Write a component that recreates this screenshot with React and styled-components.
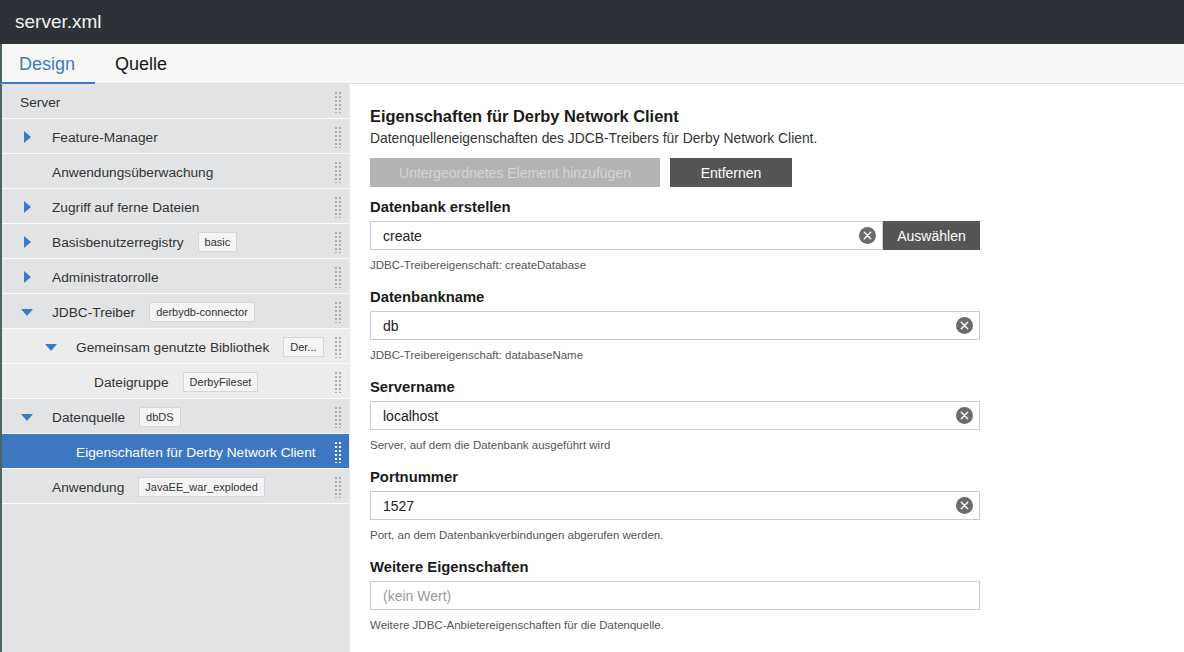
import * as React from "react";
import styled, { createGlobalStyle, css } from "styled-components";

const GlobalStyle = createGlobalStyle`
  html, body {
    margin: 0;
    padding: 0;
    background: #ffffff;
  }
  body {
    font-family: "Liberation Sans", Arial, sans-serif;
  }
  * {
    box-sizing: border-box;
  }
`;

const Page = styled.div`
  width: 1184px;
  height: 652px;
  display: flex;
  flex-direction: column;
  overflow: hidden;
`;

const Header = styled.header`
  height: 44px;
  flex: none;
  background: #2c3237;
  display: flex;
  align-items: center;
  padding-left: 15px;
  color: #f2f2f2;
  font-size: 19px;
`;

const TabBar = styled.nav`
  height: 40px;
  flex: none;
  background: #f7f7f5;
  border-bottom: 1px solid #dedede;
  border-left: 2px solid #4a655f;
  display: flex;
`;

const Tab = styled.div`
  display: flex;
  align-items: center;
  padding: 2px 20px 0 ${(p) => (p.$first ? "17px" : "20px")};
  font-size: 18px;
  color: ${(p) => (p.$active ? "#3e7ac0" : "#151515")};
  border-bottom: 2px solid ${(p) => (p.$active ? "#3e7ac0" : "transparent")};
  margin-bottom: -1px;
`;

const Body = styled.div`
  flex: 1;
  display: flex;
  min-height: 0;
`;

const Sidebar = styled.aside`
  width: 350px;
  flex: none;
  background: #e2e3e4;
  border-left: 2px solid #4a655f;
  border-right: 1px solid #ebebeb;
`;

const Row = styled.div`
  height: 35px;
  display: flex;
  align-items: center;
  padding-top: 2px;
  padding-left: ${(p) => p.$indent}px;
  padding-right: 7px;
  border-bottom: 1px solid #fbfbfb;
  font-size: 13.7px;
  color: #333333;
  background: #e2e3e4;
  ${(p) =>
    p.$nested &&
    css`
      background: #ececec;
    `}
  ${(p) =>
    p.$selected &&
    css`
      background: #3d77c2;
      color: #ffffff;
    `}
`;

const ArrowSlot = styled.span`
  width: 28px;
  flex: none;
  display: flex;
  align-items: center;
  svg {
    margin-left: -3px;
    display: block;
  }
`;

const Label = styled.span`
  white-space: nowrap;
  flex: none;
`;

const Tag = styled.span`
  margin-left: 14px;
  height: 20px;
  line-height: 18px;
  padding: 0 6px;
  background: #f4f4f4;
  border: 1px solid #d6d6d6;
  font-size: 11px;
  color: #333;
  white-space: nowrap;
  flex: none;
`;

const Handle = styled.svg`
  margin-left: auto;
  flex: none;
  display: block;
`;

const Content = styled.main`
  flex: 1;
  padding: 22px 0 0 20px;
`;

const Title = styled.h1`
  margin: 0;
  font-size: 16.4px;
  line-height: 20px;
  font-weight: 700;
  color: #1b1b1b;
`;

const Subtitle = styled.p`
  margin: 2px 0 0;
  font-size: 13.85px;
  line-height: 20px;
  color: #333333;
`;

const ButtonRow = styled.div`
  display: flex;
  gap: 10px;
  margin-top: 10px;
`;

const Button = styled.button`
  height: 29px;
  border: none;
  padding: 0;
  font-family: inherit;
  font-size: 14px;
  width: ${(p) => p.$width}px;
  background: ${(p) => (p.$disabled ? "#b4b4b4" : "#555555")};
  color: ${(p) => (p.$disabled ? "#d6d6d6" : "#ffffff")};
  flex: none;
`;

const Form = styled.div`
  display: flex;
  flex-direction: column;
  gap: 14px;
  margin-top: 10px;
  width: 610px;
`;

const Field = styled.div`
  display: flex;
  flex-direction: column;
`;

const FieldLabel = styled.label`
  font-size: 14.8px;
  line-height: 20px;
  font-weight: 700;
  color: #1b1b1b;
`;

const InputRow = styled.div`
  display: flex;
  margin-top: 4px;
`;

const InputBox = styled.div`
  flex: 1;
  height: 29px;
  border: 1px solid #cccccc;
  display: flex;
  align-items: center;
  padding: 0 6px 0 12px;
  font-size: 14px;
  color: ${(p) => (p.$empty ? "#9a9a9a" : "#222222")};
  background: #ffffff;
`;

const Value = styled.span`
  flex: 1;
`;

const Help = styled.div`
  margin-top: 7px;
  font-size: 11.5px;
  line-height: 16px;
  color: #555555;
`;

const ClearIcon = () => (
  <svg width="17" height="17" viewBox="0 0 17 17">
    <circle cx="8.5" cy="8.5" r="8.5" fill="#6b6b6b" />
    <path
      d="M5.3 5.3 L11.7 11.7 M11.7 5.3 L5.3 11.7"
      stroke="#ffffff"
      strokeWidth="1.4"
      strokeLinecap="round"
    />
  </svg>
);

const Arrow = ({ dir }) => (
  <svg width="12" height="12" viewBox="0 0 12 12">
    {dir === "right" ? (
      <polygon points="3,0 10,6 3,12" fill="#3b7ac6" />
    ) : (
      <polygon points="0,3 12,3 6,10" fill="#3b7ac6" />
    )}
  </svg>
);

const Dots = ({ color }) => (
  <Handle width="8" height="22" viewBox="0 0 8 22">
    {[0, 1, 2, 3, 4, 5].map((r) =>
      [0, 4].map((c) => (
        <rect key={`${r}-${c}`} x={c + 1} y={r * 4 + 1} width="2" height="2" fill={color} />
      ))
    )}
  </Handle>
);

const tree = [
  { label: "Server", x: 20, root: true },
  { label: "Feature-Manager", x: 52, arrow: "right" },
  { label: "Anwendungsüberwachung", x: 52 },
  { label: "Zugriff auf ferne Dateien", x: 52, arrow: "right" },
  { label: "Basisbenutzerregistry", x: 52, arrow: "right", tag: "basic" },
  { label: "Administratorrolle", x: 52, arrow: "right" },
  { label: "JDBC-Treiber", x: 52, arrow: "down", tag: "derbydb-connector" },
  { label: "Gemeinsam genutzte Bibliothek", x: 76, arrow: "down", tag: "Der...", nested: true },
  { label: "Dateigruppe", x: 94, tag: "DerbyFileset", nested: true },
  { label: "Datenquelle", x: 52, arrow: "down", tag: "dbDS" },
  { label: "Eigenschaften für Derby Network Client", x: 76, selected: true },
  { label: "Anwendung", x: 52, tag: "JavaEE_war_exploded" },
];

const fields = [
  { label: "Datenbank erstellen", value: "create", help: "JDBC-Treibereigenschaft: createDatabase", pick: true },
  { label: "Datenbankname", value: "db", help: "JDBC-Treibereigenschaft: databaseName" },
  { label: "Servername", value: "localhost", help: "Server, auf dem die Datenbank ausgeführt wird" },
  { label: "Portnummer", value: "1527", help: "Port, an dem Datenbankverbindungen abgerufen werden." },
  { label: "Weitere Eigenschaften", placeholder: "(kein Wert)", help: "Weitere JDBC-Anbietereigenschaften für die Datenquelle." },
];

const App = () => {
  return (
    <Page>
      <GlobalStyle />
      <Header>server.xml</Header>
      <TabBar>
        <Tab $active $first>Design</Tab>
        <Tab>Quelle</Tab>
      </TabBar>
      <Body>
        <Sidebar>
          {tree.map((item) => (
            <Row
              key={item.label}
              $indent={item.root ? 18 : item.x - 2 - 28}
              $nested={item.nested}
              $selected={item.selected}
            >
              {!item.root && <ArrowSlot>{item.arrow && <Arrow dir={item.arrow} />}</ArrowSlot>}
              <Label>{item.label}</Label>
              {item.tag && <Tag>{item.tag}</Tag>}
              <Dots color={item.selected ? "#ffffff" : "#adadad"} />
            </Row>
          ))}
        </Sidebar>
        <Content>
          <Title>Eigenschaften für Derby Network Client</Title>
          <Subtitle>Datenquelleneigenschaften des JDCB-Treibers für Derby Network Client.</Subtitle>
          <ButtonRow>
            <Button $disabled $width={290}>Untergeordnetes Element hinzufügen</Button>
            <Button $width={122}>Entfernen</Button>
          </ButtonRow>
          <Form>
            {fields.map((f) => (
              <Field key={f.label}>
                <FieldLabel>{f.label}</FieldLabel>
                <InputRow>
                  <InputBox $empty={!f.value}>
                    <Value>{f.value || f.placeholder}</Value>
                    {f.value && <ClearIcon />}
                  </InputBox>
                  {f.pick && <Button $width={97}>Auswählen</Button>}
                </InputRow>
                <Help>{f.help}</Help>
              </Field>
            ))}
          </Form>
        </Content>
      </Body>
    </Page>
  );
};

export default App;
